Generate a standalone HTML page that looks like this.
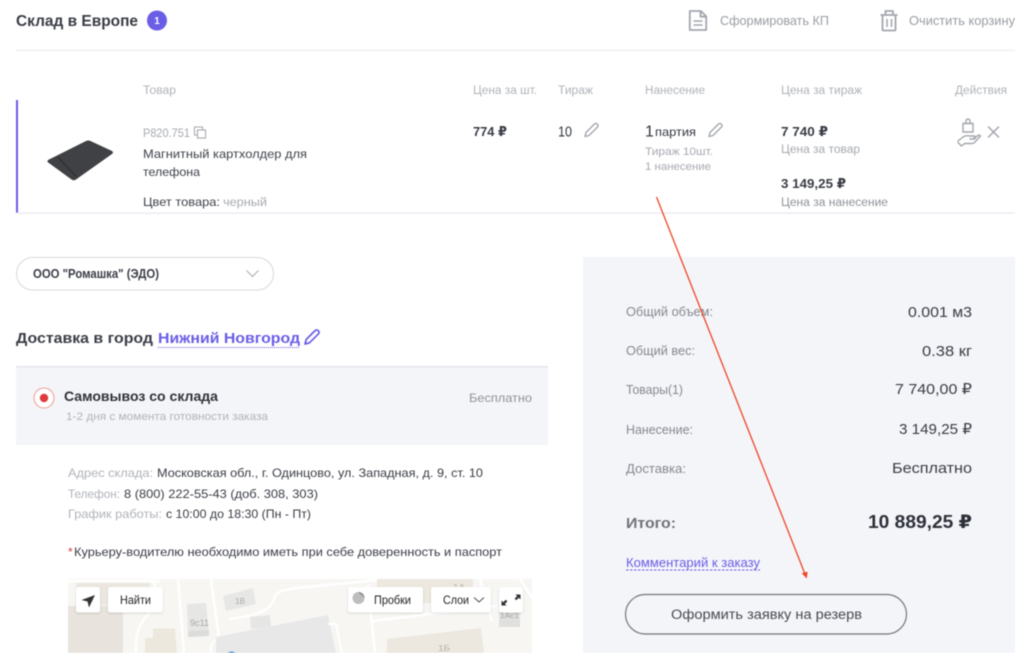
<!DOCTYPE html>
<html lang="ru"><head><meta charset="utf-8"><title>Корзина</title>
<style>
html,body{margin:0;padding:0;background:#fff;width:1024px;height:653px;overflow:hidden}
svg{display:block;filter:blur(.4px)}
text{font-family:"Liberation Sans","DejaVu Sans",sans-serif;white-space:pre}
.g{fill:#a6a9b1}.d{fill:#33363f}.m{fill:#83868e}
</style></head><body>
<svg width="1024" height="653" viewBox="0 0 1024 653" xmlns="http://www.w3.org/2000/svg">
<rect width="1024" height="653" fill="#fff"/>

<!-- Header -->
<text x="16" y="26" font-size="15.5" font-weight="700" fill="#3a3d46" textLength="122" lengthAdjust="spacingAndGlyphs">Склад в Европе</text>
<circle cx="157" cy="20.5" r="10" fill="#6a5de6"/>
<text x="157" y="24" font-size="10" font-weight="700" fill="#fff" text-anchor="middle">1</text>
<g fill="none" stroke="#a3a6ae" stroke-width="1.8" stroke-linejoin="round">
<path d="M689.800 11h11l5.400 5.400V30h-16.400z"/><path d="M700.500 11v5.700h5.700"/><path d="M693.500 21h9M693.500 25h9" stroke-width="1.500"/>
<path d="M880.500 15h17M882.500 15v14.500q0 1 1 1h11q1 0 1-1V15M885.500 15v-4h7.500v4" /><path d="M887 19v8M891.500 19v8" stroke-width="1.500"/>
</g>
<text x="720" y="25" font-size="12.5" fill="#9a9da5" textLength="109" lengthAdjust="spacingAndGlyphs">Сформировать КП</text>
<text x="909" y="25" font-size="12.5" fill="#9a9da5" textLength="106" lengthAdjust="spacingAndGlyphs">Очистить корзину</text>
<rect x="16" y="49.500" width="999" height="1.500" fill="#f0f0f6"/>

<!-- Table head -->
<g font-size="11.5" fill="#b0b3ba">
<text x="143" y="94" textLength="33" lengthAdjust="spacingAndGlyphs">Товар</text>
<text x="473" y="94" textLength="64" lengthAdjust="spacingAndGlyphs">Цена за шт.</text>
<text x="558" y="94" textLength="35" lengthAdjust="spacingAndGlyphs">Тираж</text>
<text x="645" y="94" textLength="60" lengthAdjust="spacingAndGlyphs">Нанесение</text>
<text x="781" y="94" textLength="81" lengthAdjust="spacingAndGlyphs">Цена за тираж</text>
<text x="955" y="94" textLength="52" lengthAdjust="spacingAndGlyphs">Действия</text>
</g>

<!-- Row -->
<rect x="16" y="100" width="2" height="113" fill="#6a5de6"/>
<rect x="16" y="212.500" width="999" height="1.200" fill="#e9e9f1"/>
<path d="M47.500 162Q47 160.500 49 159.500L86 141Q88 140 90.500 141L112 151Q114 152.500 112 154L76 179.500Q74 181 71.500 179.500Z" fill="#404144"/>
<path d="M58 157L76 176.500" stroke="#2a2a2d" stroke-width="1" fill="none"/>
<text x="143" y="137" font-size="11.5" class="g" textLength="47" lengthAdjust="spacingAndGlyphs">P820.751</text>
<g fill="none" stroke="#a6a9b1" stroke-width="1.100"><rect x="197.500" y="130" width="8" height="8"/><path d="M197 135h-2.500v-8h8v2.500"/></g>
<text x="143" y="158" font-size="12" fill="#3f424b" textLength="164" lengthAdjust="spacingAndGlyphs">Магнитный картхолдер для</text>
<text x="143" y="176" font-size="12" fill="#3f424b" textLength="57" lengthAdjust="spacingAndGlyphs">телефона</text>
<text x="143" y="206" font-size="12" fill="#3f424b" textLength="77" lengthAdjust="spacingAndGlyphs">Цвет товара:</text>
<text x="223" y="206" font-size="12" class="g" textLength="44" lengthAdjust="spacingAndGlyphs">черный</text>

<text x="473" y="136" font-size="13" font-weight="700" fill="#3a3d46" textLength="34" lengthAdjust="spacingAndGlyphs">774 ₽</text>
<text x="558" y="136.500" font-size="14.500" class="d" textLength="14" lengthAdjust="spacingAndGlyphs">10</text>
<g fill="none" stroke="#a3a6ae" stroke-width="1.400" stroke-linejoin="round">
<path d="M585 136.500l1-4 8.500-8.500a1.800 1.800 0 0 1 2.600 0l.4.400a1.800 1.800 0 0 1 0 2.600L589 135.500z"/>
<path d="M709 136.500l1-4 8.500-8.500a1.800 1.800 0 0 1 2.600 0l.4.400a1.800 1.800 0 0 1 0 2.600L713 135.500z"/>
</g>
<text x="645" y="136.500" font-size="16" class="d" textLength="7" lengthAdjust="spacing">1</text>
<text x="655" y="136" font-size="12" class="d" textLength="41" lengthAdjust="spacingAndGlyphs">партия</text>
<text x="645" y="155" font-size="11" class="g" textLength="68" lengthAdjust="spacingAndGlyphs">Тираж 10шт.</text>
<text x="645" y="170" font-size="11" class="g" textLength="66" lengthAdjust="spacingAndGlyphs">1 нанесение</text>
<text x="781" y="136" font-size="13" font-weight="700" fill="#3a3d46" textLength="47" lengthAdjust="spacingAndGlyphs">7 740 ₽</text>
<text x="781" y="153" font-size="11.500" class="g" textLength="79" lengthAdjust="spacingAndGlyphs">Цена за товар</text>
<text x="781" y="188" font-size="13" font-weight="700" fill="#3a3d46" textLength="65" lengthAdjust="spacingAndGlyphs">3 149,25 ₽</text>
<text x="781" y="206" font-size="11.500" fill="#8f929a" textLength="107" lengthAdjust="spacingAndGlyphs">Цена за нанесение</text>
<g fill="none" stroke="#a3a6ae" stroke-width="1.400" stroke-linejoin="round" stroke-linecap="round">
<path d="M963 123.500h10v8.500h-10zM966 123.500v-2.500a2 2 0 0 1 4 0v2.500"/>
<path d="M958 141l5-4q3-2 6-1h5a1.500 1.500 0 0 1 0 3h-4M974 138l5-3 1.500 1-6 6.500q-1 1-3 1h-7l-3 2.500-3.500-3.500"/>
<path d="M988.500 127l10 10M998.500 127l-10 10" stroke-width="1.500"/>
</g>

<!-- Select -->
<rect x="16.500" y="257.500" width="257" height="32.500" rx="16.250" fill="#fff" stroke="#d9d9de"/>
<text x="33" y="278" font-size="12.500" font-weight="700" fill="#3a3d46" textLength="126" lengthAdjust="spacingAndGlyphs">ООО "Ромашка" (ЭДО)</text>
<path d="M246.500 270.500l6 6 6-6" fill="none" stroke="#b3b5bb" stroke-width="1.200"/>

<!-- Delivery -->
<text x="16" y="343" font-size="15" font-weight="700" fill="#3a3d46" textLength="137" lengthAdjust="spacingAndGlyphs">Доставка в город</text>
<text x="158" y="343" font-size="15" font-weight="700" fill="#6a5de6" textLength="142" lengthAdjust="spacingAndGlyphs">Нижний Новгород</text>
<path d="M158 347.500h142" stroke="#6a5de6" stroke-width="1" stroke-dasharray="1 1"/>
<path d="M305 344l1.200-4.500 9-9a2 2 0 0 1 2.800 0l.5.500a2 2 0 0 1 0 2.800l-9 9z" fill="none" stroke="#6a5de6" stroke-width="1.700" stroke-linejoin="round"/>

<rect x="16" y="366" width="532" height="79" fill="#f4f5f8"/>
<rect x="16" y="366" width="532" height="1.300" fill="#e2e3e8"/>
<circle cx="44" cy="398" r="10" fill="#fff" stroke="#ec9a94" stroke-width="1"/>
<circle cx="44" cy="398" r="4.200" fill="#e0393c"/>
<text x="64" y="401" font-size="13.500" font-weight="700" fill="#2f323b" textLength="154" lengthAdjust="spacingAndGlyphs">Самовывоз со склада</text>
<text x="66" y="420" font-size="11" fill="#b0b3ba" textLength="202" lengthAdjust="spacingAndGlyphs">1-2 дня с момента готовности заказа</text>
<text x="469" y="402" font-size="12" fill="#8f929a" textLength="63" lengthAdjust="spacingAndGlyphs">Бесплатно</text>

<g font-size="12">
<text x="68" y="477" fill="#b0b3ba" textLength="85" lengthAdjust="spacingAndGlyphs">Адрес склада:</text>
<text x="157" y="477" fill="#3a3d46" textLength="326" lengthAdjust="spacingAndGlyphs">Московская обл., г. Одинцово, ул. Западная, д. 9, ст. 10</text>
<text x="68" y="498" fill="#b0b3ba" textLength="52" lengthAdjust="spacingAndGlyphs">Телефон:</text>
<text x="124" y="498" fill="#3a3d46" textLength="194" lengthAdjust="spacingAndGlyphs">8 (800) 222-55-43 (доб. 308, 303)</text>
<text x="68" y="518" fill="#b0b3ba" textLength="94" lengthAdjust="spacingAndGlyphs">График работы:</text>
<text x="166" y="518" fill="#3a3d46" textLength="145" lengthAdjust="spacingAndGlyphs">с 10:00 до 18:30 (Пн - Пт)</text>
<text x="68" y="556" fill="#e0393c">*</text>
<text x="74" y="556" fill="#3a3d46" textLength="428" lengthAdjust="spacingAndGlyphs">Курьеру-водителю необходимо иметь при себе доверенность и паспорт</text>
</g>

<!-- Map -->
<clipPath id="mc"><rect x="68" y="579" width="464" height="74"/></clipPath>
<g clip-path="url(#mc)">
<rect x="68" y="579" width="464" height="74" fill="#f7f6f3"/>
<rect x="68" y="606" width="55" height="47" fill="#e9e3dd"/>
<rect x="76" y="583" width="74" height="22" fill="#ebe7e0"/>
<path d="M68 581H160" stroke="#fff" stroke-width="2.500"/>
<path d="M136 653q-2-28 16-42 6-6 2-30" fill="none" stroke="#fff" stroke-width="2.500"/>
<path d="M178 579l6 74M211 579l8 60" stroke="#fff" stroke-width="2.500" fill="none"/>
<path d="M153 628.500h22l2 24.500h-32v-15h8z" fill="#ece8dd"/>
<path d="M187 604l19-1 3 33-21 1z" fill="#e6e6e5"/>
<path d="M188 631l21-1 0 6-21 1z" fill="#dcdcdb"/>
<text x="190" y="626" font-size="9.500" fill="#aaaaaa" textLength="19" lengthAdjust="spacingAndGlyphs">9с11</text>
<path d="M223 596l30-8 3 16-30 7z" fill="#e7e7e6"/>
<text x="235" y="604" font-size="8.500" fill="#ababab" textLength="10" lengthAdjust="spacingAndGlyphs">1В</text>
<path d="M250 617l20-2 1 12-20 2z" fill="#e6e6e5"/>
<path d="M229 619q20-2 34-8 10-5 12-15 3-6 22-8l80-8" fill="none" stroke="#fff" stroke-width="2.500"/>
<path d="M216 637l112-22 8 38H216z" fill="#e8e8e9"/>
<path d="M216 641q-6 2-5 12" fill="none" stroke="#fff" stroke-width="2"/>
<path d="M328 624l8 0 6 29" fill="none" stroke="#fff" stroke-width="2"/>
<circle cx="231.500" cy="657" r="5.500" fill="#4a90d9"/>
<rect x="377" y="579" width="96" height="24" fill="#ece8df"/>
<text x="453" y="590" font-size="8.500" fill="#b5b1a8" textLength="12" lengthAdjust="spacingAndGlyphs">1А</text>
<path d="M372 621l125-15M368 585l7 68M480 579l12 42M520 579l14 22" fill="none" stroke="#fff" stroke-width="2.500"/>
<path d="M387 639l94-11 3 25h-97z" fill="#ece8df"/>
<text x="438" y="651" font-size="8.500" fill="#b5b1a8" textLength="12" lengthAdjust="spacingAndGlyphs">1Б</text>
<rect x="499" y="612" width="21" height="15" fill="#e0e0df"/>
<text x="500" y="618" font-size="7.500" fill="#a5a5a5" textLength="19" lengthAdjust="spacingAndGlyphs">1Ас1</text>
<g fill="#fff" style="filter:drop-shadow(0 1px 1px rgba(0,0,0,.13))">
<rect x="76" y="587" width="24" height="25.500" rx="2.500"/>
<rect x="108" y="587" width="55" height="25.500" rx="2.500"/>
<rect x="348" y="587" width="75" height="25.500" rx="2.500"/>
<rect x="431" y="587" width="60" height="25.500" rx="2.500"/>
<rect x="499" y="587" width="24" height="25.500" rx="2.500"/>
</g>
<path d="M95 595l-13.500 5 6 1.500 1.500 6z" fill="#333"/>
<text x="120" y="604" font-size="12" fill="#222" textLength="31" lengthAdjust="spacingAndGlyphs">Найти</text>
<circle cx="358.500" cy="598" r="6" fill="#bdbdbd"/>
<path d="M358 592a6 6 0 0 1 6.500 6z" fill="#8f8f8f"/>
<text x="374" y="604" font-size="12" fill="#222" textLength="37" lengthAdjust="spacingAndGlyphs">Пробки</text>
<text x="443" y="604" font-size="12" fill="#222" textLength="26" lengthAdjust="spacingAndGlyphs">Слои</text>
<path d="M474 597.500l5 4.500 5-4.500" fill="none" stroke="#444" stroke-width=".9"/>
<path d="M515.500 594.500h5v5l-1.700-1.700-2.500 2.500-1.700-1.700 2.500-2.500zM506.500 605.500h-5v-5l1.700 1.700 2.500-2.500 1.700 1.700-2.500 2.500z" fill="#333"/>
</g>

<!-- Summary -->
<rect x="583" y="257" width="432" height="396" fill="#f4f5f9"/>
<g font-size="12.500" fill="#85888f">
<text x="626" y="316" textLength="87" lengthAdjust="spacingAndGlyphs">Общий объем:</text>
<text x="626" y="355" textLength="69" lengthAdjust="spacingAndGlyphs">Общий вес:</text>
<text x="626" y="394" textLength="57" lengthAdjust="spacingAndGlyphs">Товары(1)</text>
<text x="626" y="434" textLength="67" lengthAdjust="spacingAndGlyphs">Нанесение:</text>
<text x="626" y="473" textLength="60" lengthAdjust="spacingAndGlyphs">Доставка:</text>
</g>
<g font-size="15" fill="#3a3d46">
<text x="908" y="317" textLength="64" lengthAdjust="spacingAndGlyphs">0.001 м3</text>
<text x="922" y="356" textLength="50" lengthAdjust="spacingAndGlyphs">0.38 кг</text>
<text x="895" y="394" textLength="77" lengthAdjust="spacingAndGlyphs">7 740,00 ₽</text>
<text x="899" y="434" textLength="73" lengthAdjust="spacingAndGlyphs">3 149,25 ₽</text>
<text x="892" y="473" textLength="80" lengthAdjust="spacingAndGlyphs">Бесплатно</text>
</g>
<text x="626" y="528" font-size="15" font-weight="700" fill="#6f727a" textLength="50" lengthAdjust="spacingAndGlyphs">Итого:</text>
<text x="868" y="528" font-size="18.500" font-weight="700" fill="#2d3039" textLength="104" lengthAdjust="spacingAndGlyphs">10 889,25 ₽</text>
<text x="626" y="567" font-size="12.500" fill="#6a5de6" textLength="134" lengthAdjust="spacingAndGlyphs">Комментарий к заказу</text>
<path d="M626 570h134" stroke="#6a5de6" stroke-width="1" stroke-dasharray="2.500 1.500"/>
<rect x="625.500" y="594.500" width="281" height="39.500" rx="19.750" fill="none" stroke="#74777e" stroke-width="1.200"/>
<text x="671" y="619" font-size="13.500" fill="#474a52" textLength="191" lengthAdjust="spacingAndGlyphs">Оформить заявку на резерв</text>

<!-- Annotation arrow -->
<path d="M656.500 197L805 574" stroke="#ee4725" stroke-width="1.300" fill="none"/>
<path d="M806.700 578.500l-5-5.200 6-1.600z" fill="#ee4725"/>
</svg>
</body></html>
